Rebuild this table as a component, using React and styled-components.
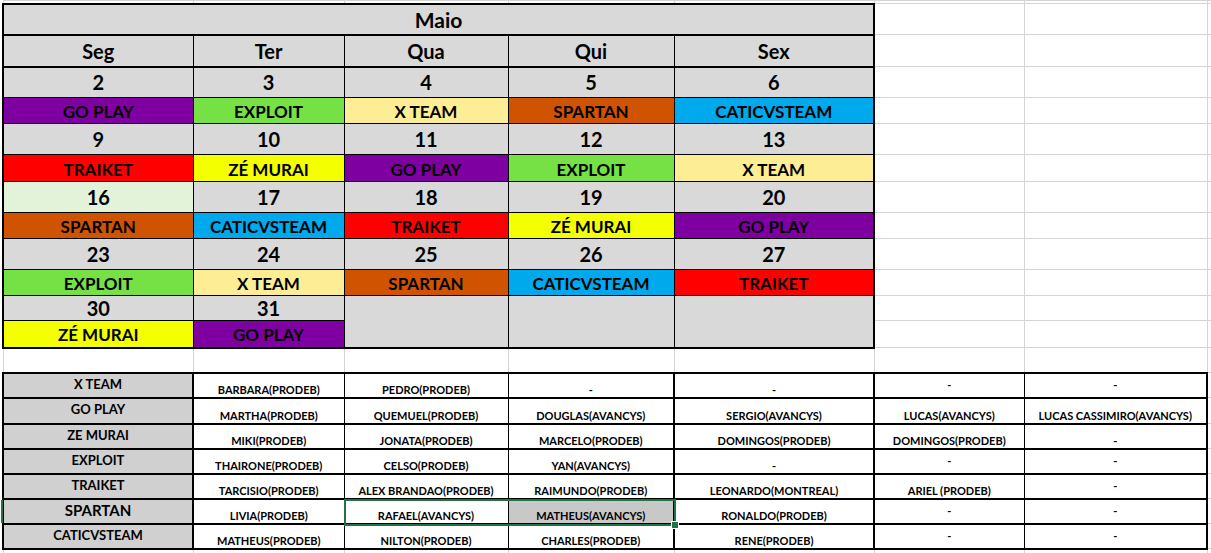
import React from 'react';
import styled, { createGlobalStyle, css } from 'styled-components';

const GlobalStyle = createGlobalStyle`
  html, body {
    margin: 0;
    padding: 0;
    background: #fff;
    overflow: hidden;
  }
  body {
    font-family: Lato, "Open Sans", Arial, sans-serif;
    color: #000;
  }
`;

const Sheet = styled.table`
  border-collapse: collapse;
  table-layout: fixed;
  width: 1209px;
  margin-left: 2px;
`;

const Row = styled.tr`
  height: ${(p) => p.$h}px;
`;

// plain spreadsheet cell with the light grid lines
const GridCell = styled.td`
  border: 1px solid #d4d4d4;
  padding: 0;
`;

const thick = (p) => css`
  ${p.$l && 'border-left-width: 2px;'}
  ${p.$r && 'border-right-width: 2px;'}
  ${p.$t && 'border-top-width: 2px;'}
  ${p.$b && 'border-bottom-width: 2px;'}
`;

const CalCell = styled.td`
  border: 1px solid #000;
  background: ${(p) => p.$bg || '#d9d9d9'};
  padding: 0 2px;
  text-align: center;
  vertical-align: middle;
  white-space: nowrap;
  overflow: hidden;
  line-height: 1;
  font-weight: 700;
  font-size: 20px;
  ${thick}
`;

const TitleCell = styled(CalCell)`
  font-size: 21px;
  padding-top: 1px;
`;

const TeamCell = styled(CalCell)`
  font-size: 17px;
  padding-top: 2px;
`;

const LabelCell = styled.td`
  border: 2px solid #000;
  background: #d0d0d0;
  padding: 0 2px 2px;
  text-align: center;
  vertical-align: middle;
  white-space: nowrap;
  line-height: 1;
  font-weight: 700;
  font-size: ${(p) => (p.$big ? 15 : 13)}px;
  position: relative;
  ${(p) =>
    p.$mark &&
    css`
      &::before {
        content: '';
        position: absolute;
        left: -3px;
        top: 0;
        bottom: 0;
        width: 2px;
        background: #217346;
        z-index: 2;
      }
    `}
`;

const NameCell = styled.td`
  border-top: 2px solid #000;
  border-bottom: 2px solid #000;
  border-left: ${(p) => p.$lw}px solid #000;
  ${(p) => p.$last && 'border-right: 2px solid #000;'}
  background: ${(p) => (p.$sel ? '#c8c8c8' : '#fff')};
  padding: 0 2px 2px;
  text-align: center;
  vertical-align: ${(p) => (p.$top ? 'top' : 'bottom')};
  white-space: nowrap;
  line-height: 1;
  font-weight: 700;
  font-size: 11px;
  position: relative;
  ${(p) => p.$top && 'padding-top: 5px;'}
`;

// excel selection frame, drawn over the two cells
const Selection = styled.div`
  position: absolute;
  z-index: 3;
  left: -1px;
  top: -1px;
  width: 328px;
  height: 23px;
  border: 2px solid #217346;
  pointer-events: none;
  &::after {
    content: '';
    position: absolute;
    right: -5px;
    bottom: -5px;
    width: 6px;
    height: 6px;
    background: #217346;
    border: 1px solid #fff;
  }
`;

const widths = [190, 151, 164, 166, 200, 150, 183, 5];

const teamColors = {
  'GO PLAY': '#7f00a1',
  EXPLOIT: '#76e144',
  'X TEAM': '#fdee95',
  SPARTAN: '#cf5300',
  CATICVSTEAM: '#00a8ec',
  TRAIKET: '#ff0000',
  'ZÉ MURAI': '#f4ff00',
};

const days = ['Seg', 'Ter', 'Qua', 'Qui', 'Sex'];

const weeks = [
  [[2, 'GO PLAY'], [3, 'EXPLOIT'], [4, 'X TEAM'], [5, 'SPARTAN'], [6, 'CATICVSTEAM']],
  [[9, 'TRAIKET'], [10, 'ZÉ MURAI'], [11, 'GO PLAY'], [12, 'EXPLOIT'], [13, 'X TEAM']],
  [[16, 'SPARTAN'], [17, 'CATICVSTEAM'], [18, 'TRAIKET'], [19, 'ZÉ MURAI'], [20, 'GO PLAY']],
  [[23, 'EXPLOIT'], [24, 'X TEAM'], [25, 'SPARTAN'], [26, 'CATICVSTEAM'], [27, 'TRAIKET']],
  [[30, 'ZÉ MURAI'], [31, 'GO PLAY'], null, null, null],
];

const weekHeights = [
  [31, 26],
  [31, 27],
  [31, 26],
  [31, 26],
  [25, 27],
];

const teams = [
  ['X TEAM', 'BARBARA(PRODEB)', 'PEDRO(PRODEB)', '-', '-', '-', '-'],
  ['GO PLAY', 'MARTHA(PRODEB)', 'QUEMUEL(PRODEB)', 'DOUGLAS(AVANCYS)', 'SERGIO(AVANCYS)', 'LUCAS(AVANCYS)', 'LUCAS CASSIMIRO(AVANCYS)'],
  ['ZE MURAI', 'MIKI(PRODEB)', 'JONATA(PRODEB)', 'MARCELO(PRODEB)', 'DOMINGOS(PRODEB)', 'DOMINGOS(PRODEB)', '-'],
  ['EXPLOIT', 'THAIRONE(PRODEB)', 'CELSO(PRODEB)', 'YAN(AVANCYS)', '-', '-', '-'],
  ['TRAIKET', 'TARCISIO(PRODEB)', 'ALEX BRANDAO(PRODEB)', 'RAIMUNDO(PRODEB)', 'LEONARDO(MONTREAL)', 'ARIEL (PRODEB)', '-'],
  ['SPARTAN', 'LIVIA(PRODEB)', 'RAFAEL(AVANCYS)', 'MATHEUS(AVANCYS)', 'RONALDO(PRODEB)', '-', '-'],
  ['CATICVSTEAM', 'MATHEUS(PRODEB)', 'NILTON(PRODEB)', 'CHARLES(PRODEB)', 'RENE(PRODEB)', '-', '-'],
];

const teamHeights = [25, 26, 25, 25, 25, 25, 25];
// left border width of each name column
const lineWidths = [2, 1, 1, 2, 2, 1];

const Pad = ({ n }) =>
  Array.from({ length: n }, (_, i) => <GridCell key={`g${i}`} />);

export default function App() {
  const last = weeks.length - 1;
  return (
    <>
      <GlobalStyle />
      <Sheet>
        <colgroup>
          {widths.map((w, i) => (
            <col key={i} style={{ width: w }} />
          ))}
        </colgroup>
        <tbody>
          <Row $h={3}>
            <Pad n={8} />
          </Row>

          {/* month title */}
          <Row $h={31}>
            <TitleCell colSpan={5} $t $l $r $b>
              Maio
            </TitleCell>
            <Pad n={3} />
          </Row>

          {/* weekdays */}
          <Row $h={32}>
            {days.map((d, j) => (
              <CalCell key={d} $l={j === 0} $r={j === 4} $b>
                {d}
              </CalCell>
            ))}
            <Pad n={3} />
          </Row>

          {weeks.map((week, i) => (
            <React.Fragment key={i}>
              <Row $h={weekHeights[i][0]}>
                {week.map((d, j) =>
                  d ? (
                    <CalCell
                      key={j}
                      $l={j === 0}
                      $r={j === 4}
                      $bg={d[0] === 16 ? '#e2f3da' : undefined}
                    >
                      {d[0]}
                    </CalCell>
                  ) : (
                    <CalCell key={j} rowSpan={2} $r={j === 4} $b />
                  )
                )}
                <Pad n={3} />
              </Row>
              <Row $h={weekHeights[i][1]}>
                {week.map((d, j) =>
                  d ? (
                    <TeamCell
                      key={j}
                      $l={j === 0}
                      $r={j === 4}
                      $b={i === last}
                      $bg={teamColors[d[1]]}
                    >
                      {d[1]}
                    </TeamCell>
                  ) : null
                )}
                <Pad n={3} />
              </Row>
            </React.Fragment>
          ))}

          <Row $h={25}>
            <Pad n={8} />
          </Row>

          {/* who is in each team */}
          {teams.map((t, i) => (
            <Row key={t[0]} $h={teamHeights[i]}>
              <LabelCell $big={t[0] === 'SPARTAN'} $mark={t[0] === 'SPARTAN'}>
                {t[0]}
              </LabelCell>
              {t.slice(1).map((name, j) => (
                <NameCell
                  key={j}
                  $lw={lineWidths[j]}
                  $last={j === 5}
                  $sel={i === 5 && j === 2}
                  $top={name === '-' && j >= 4 && i !== 2}
                >
                  {name}
                  {i === 5 && j === 1 && <Selection />}
                </NameCell>
              ))}
              <GridCell />
            </Row>
          ))}

          <Row $h={10}>
            <Pad n={8} />
          </Row>
        </tbody>
      </Sheet>
    </>
  );
}
